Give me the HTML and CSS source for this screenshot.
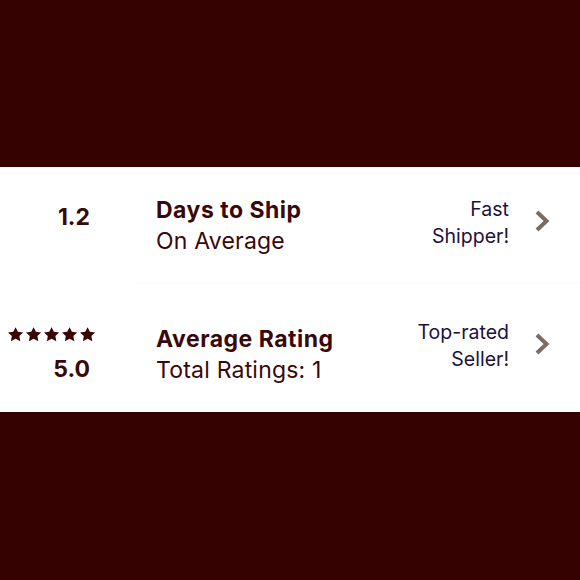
FILE: index.html
```html
<!DOCTYPE html>
<html>
<head>
<meta charset="utf-8">
<link rel="stylesheet" href="styles.css">
</head>
<body>
<div class="band">
  <div class="row row-ship">
    <div class="lead"><span class="num">1.2</span></div>
    <div class="info">
      <div class="title">Days to Ship</div>
      <div class="sub">On Average</div>
    </div>
    <div class="badge">Fast<br>Shipper!</div>
    <svg class="chev" width="16" height="22" viewBox="0 0 16 22"><polyline points="3,2 12.5,11 3,20" fill="none" stroke="#7a6e62" stroke-width="4"/></svg>
  </div>
  <div class="divider"></div>
  <div class="row row-rate">
    <div class="lead">
      <div class="stars">
        <svg width="88" height="15" viewBox="0 0 88 15" fill="#3a0606">
          <path id="s" d="M7.6 0.2l2.3 4.5 5.2 .7-3.7 3.6 .9 5.2-4.7-2.4-4.7 2.4 .9-5.2L0 5.4l5.2-.7z"/>
          <use href="#s" x="18"/>
          <use href="#s" x="36"/>
          <use href="#s" x="54"/>
          <use href="#s" x="72"/>
        </svg>
      </div>
      <span class="num">5.0</span>
    </div>
    <div class="info">
      <div class="title">Average Rating</div>
      <div class="sub">Total Ratings: 1</div>
    </div>
    <div class="badge">Top-rated<br>Seller!</div>
    <svg class="chev" width="16" height="22" viewBox="0 0 16 22"><polyline points="3,2 12.5,11 3,20" fill="none" stroke="#7a6e62" stroke-width="4"/></svg>
  </div>
</div>
</body>
</html>
```
FILE: styles.css
```css
html, body {
  margin: 0;
  padding: 0;
  background: #350101;
}
body {
  box-sizing: border-box;
  height: 580px;
  overflow: hidden;
  padding-top: 167px;
  font-family: Inter, "Liberation Sans", sans-serif;
}
.band {
  background: #ffffff;
  height: 245px;
  display: flex;
  flex-direction: column;
}
.row {
  display: flex;
  align-items: center;
}
.row-ship {
  height: 116px;
}
.row-rate {
  height: 128px;
}
.divider {
  height: 1px;
  margin-left: 135px;
  background: #fbfaf9;
}
.lead {
  width: 96px;
  display: flex;
  flex-direction: column;
  align-items: flex-end;
  flex-shrink: 0;
}
.num {
  font-weight: 700;
  font-size: 23px;
  line-height: 28px;
  color: #3a0808;
  padding-right: 6px;
}
.row-ship .num {
  margin-top: -17px;
}
.row-rate .lead,
.row-rate .info {
  margin-top: 12px;
}
.stars {
  height: 15px;
  margin-top: 2px;
  margin-bottom: 13px;
}
.stars svg {
  display: block;
}
.info {
  margin-left: 60px;
  flex: 1;
  color: #3a0808;
}
.title {
  font-weight: 700;
  font-size: 23px;
  letter-spacing: 0.5px;
  line-height: 32px;
}
.sub {
  font-size: 23px;
  letter-spacing: 0.2px;
  line-height: 32px;
  margin-top: -1px;
}
.badge {
  text-align: right;
  font-size: 19.5px;
  line-height: 27px;
  color: #21123a;
  margin-top: -4px;
}
.chev {
  display: block;
  margin-left: 25px;
  margin-right: 30px;
  margin-top: -8px;
}
```
